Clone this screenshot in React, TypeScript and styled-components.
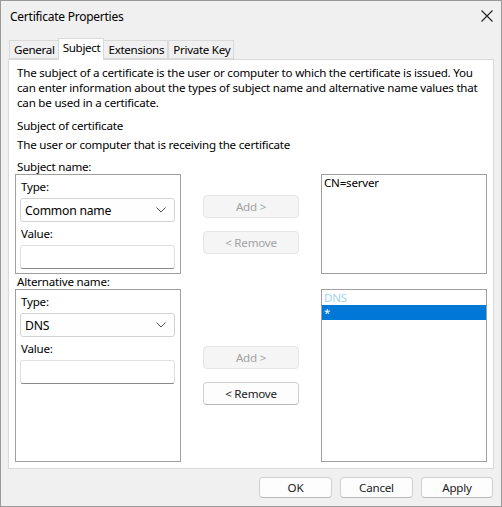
import React from 'react';
import styled, {createGlobalStyle} from 'styled-components';

const GlobalStyle = createGlobalStyle`
    html, body {
        margin: 0;
        padding: 0;
        background: #f0f0f0;
    }
    body {
        font-family: "Segoe UI", "Noto Sans", sans-serif;
        font-size: 11.6px;
        letter-spacing: -0.22px;
        color: #000;
    }
`;

const Window = styled.div`
    width: 502px;
    height: 507px;
    box-sizing: border-box;
    border: 1px solid #999;
    background: #f0f0f0;
    display: flex;
    flex-direction: column;
`;

const TitleBar = styled.div`
    height: 30px;
    display: flex;
    align-items: center;
    justify-content: space-between;
    padding: 0 8px 0 9px;
`;

const Title = styled.span`
    font-size: 12px;
    letter-spacing: -0.25px;
`;

const Body = styled.div`
    flex: 1;
    display: flex;
    flex-direction: column;
    padding: 7px 7px 0 7px;
`;

const TabStrip = styled.div`
    display: flex;
    align-items: flex-end;
    height: 21px;
    padding-left: 1px;
`;

const Tab = styled.div<{$active?: boolean}>`
    box-sizing: border-box;
    height: ${({$active}) => ($active ? '22px' : '19px')};
    padding: 0 3px 0 4px;
    display: flex;
    align-items: center;
    white-space: nowrap;
    letter-spacing: -0.3px;
    border: 1px solid #d9d9d9;
    border-bottom: ${({$active}) => ($active ? 'none' : '1px solid #d9d9d9')};
    margin-left: ${({$active}) => ($active ? '-1px' : '0')};
    margin-right: ${({$active}) => ($active ? '-1px' : '0')};
    background: ${({$active}) => ($active ? '#fff' : '#f0f0f0')};
    position: relative;
    z-index: ${({$active}) => ($active ? 1 : 0)};
    margin-bottom: ${({$active}) => ($active ? '-1px' : '0')};
    padding-bottom: ${({$active}) => ($active ? '4px' : '0')};
`;

const Pane = styled.div`
    box-sizing: border-box;
    height: 410px;
    background: #fff;
    border: 1px solid #d9d9d9;
    padding: 5px 6px 0 6px;
    display: flex;
    flex-direction: column;
`;

const Text = styled.div<{$gap?: number}>`
    line-height: 15px;
    padding-left: 2px;
    white-space: nowrap;
    margin-top: ${({$gap}) => $gap ?? 0}px;
`;

const Row = styled.div<{$height: number}>`
    display: grid;
    grid-template-columns: 166px 1fr 166px;
    height: ${({$height}) => $height}px;
`;

const GroupBox = styled.div`
    box-sizing: border-box;
    border: 1px solid #a0a0a0;
    padding: 3px 5px 0 4px;
    display: flex;
    flex-direction: column;
`;

const FieldLabel = styled.div`
    line-height: 15px;
    margin: 1px 0 4px 1px;
`;

const Combo = styled.div`
    box-sizing: border-box;
    height: 24px;
    border: 1px solid #d3d3d3;
    border-radius: 3px;
    background: #fefefe;
    display: flex;
    align-items: center;
    justify-content: space-between;
    padding: 0 8px 0 4px;
    margin-bottom: 3px;
    font-size: 12.2px;
`;

const TextBox = styled.div`
    box-sizing: border-box;
    height: 24px;
    border: 1px solid #e0e0e0;
    border-bottom: 1px solid #8a8a8a;
    border-radius: 3px;
    background: #fff;
`;

const ButtonColumn = styled.div`
    display: flex;
    flex-direction: column;
    align-items: center;
    justify-content: center;
    gap: 13px;
`;

const Button = styled.div<{$disabled?: boolean; $width?: number}>`
    box-sizing: border-box;
    width: ${({$width}) => $width ?? 96}px;
    height: ${({$width}) => ($width ? 21 : 23)}px;
    border-radius: 4px;
    border: 1px solid ${({$disabled}) => ($disabled ? '#e5e5e5' : '#d0d0d0')};
    border-bottom-color: ${({$disabled}) => ($disabled ? '#e5e5e5' : '#b8b8b8')};
    background: ${({$disabled}) => ($disabled ? '#f5f5f5' : '#fdfdfd')};
    color: ${({$disabled}) => ($disabled ? '#a2a2a2' : '#1a1a1a')};
    display: flex;
    align-items: center;
    justify-content: center;
`;

const ListBox = styled.div`
    box-sizing: border-box;
    border: 1px solid #a0a0a0;
    background: #fff;
    display: flex;
    flex-direction: column;
`;

const ListItem = styled.div<{$selected?: boolean; $muted?: boolean}>`
    height: 15px;
    line-height: 15px;
    padding-left: 2px;
    overflow: hidden;
    background: ${({$selected}) => ($selected ? '#0078d7' : 'transparent')};
    color: ${({$selected, $muted}) => ($selected ? '#fff' : $muted ? '#9fd3ee' : '#000')};
`;

const Footer = styled.div`
    height: 37px;
    display: flex;
    align-items: center;
    justify-content: flex-end;
    gap: 8px;
    padding-right: 1px;
`;

const Chevron = () => (
    <svg width="10" height="6" viewBox="0 0 10 6">
        <path d="M0.5 0.5 L5 5 L9.5 0.5" fill="none" stroke="#555" strokeWidth="1" />
    </svg>
);

const CloseIcon = () => (
    <svg width="12" height="12" viewBox="0 0 12 12">
        <path d="M0.5 0.5 L11.5 11.5 M11.5 0.5 L0.5 11.5" stroke="#222" strokeWidth="1.1" />
    </svg>
);

const NameGroup = ({type}: {type: string}) => (
    <GroupBox>
        <FieldLabel>Type:</FieldLabel>
        <Combo>
            <span>{type}</span>
            <Chevron />
        </Combo>
        <FieldLabel>Value:</FieldLabel>
        <TextBox />
    </GroupBox>
);

const App = () => {
    return (
        <>
            <GlobalStyle />
            <Window>
                <TitleBar>
                    <Title>Certificate Properties</Title>
                    <CloseIcon />
                </TitleBar>
                <Body>
                    <TabStrip>
                        <Tab>General</Tab>
                        <Tab $active>Subject</Tab>
                        <Tab>Extensions</Tab>
                        <Tab>Private Key</Tab>
                    </TabStrip>
                    <Pane>
                        <Text>
                            The subject of a certificate is the user or computer to which the certificate is issued. You<br />
                            can enter information about the types of subject name and alternative name values that<br />
                            can be used in a certificate.
                        </Text>
                        <Text $gap={8}>Subject of certificate</Text>
                        <Text $gap={4}>The user or computer that is receiving the certificate</Text>
                        <Text $gap={7}>Subject name:</Text>
                        <Row $height={100}>
                            <NameGroup type="Common name" />
                            <ButtonColumn>
                                <Button $disabled>Add &gt;</Button>
                                <Button $disabled>&lt; Remove</Button>
                            </ButtonColumn>
                            <ListBox>
                                <ListItem>CN=server</ListItem>
                            </ListBox>
                        </Row>
                        <Text>Alternative name:</Text>
                        <Row $height={173}>
                            <NameGroup type="DNS" />
                            <ButtonColumn>
                                <Button $disabled>Add &gt;</Button>
                                <Button>&lt; Remove</Button>
                            </ButtonColumn>
                            <ListBox>
                                <ListItem $muted>DNS</ListItem>
                                <ListItem $selected>*</ListItem>
                            </ListBox>
                        </Row>
                    </Pane>
                    <Footer>
                        <Button $width={73}>OK</Button>
                        <Button $width={73}>Cancel</Button>
                        <Button $width={72}>Apply</Button>
                    </Footer>
                </Body>
            </Window>
        </>
    );
};

export default App;
